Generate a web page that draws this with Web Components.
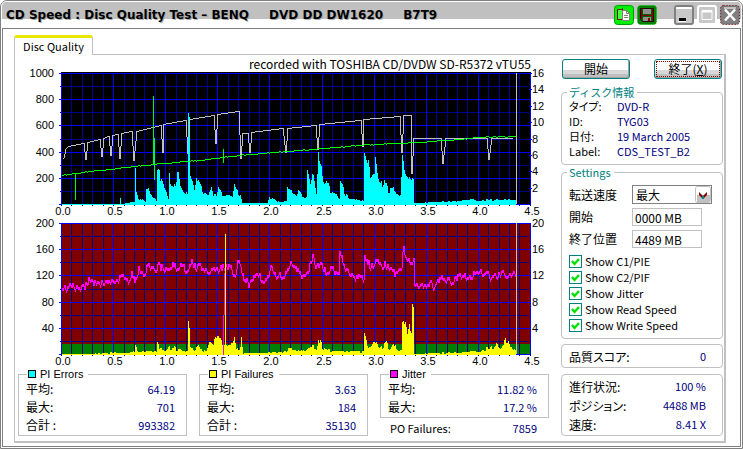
<!DOCTYPE html>
<html lang="ja">
<head>
<meta charset="utf-8">
<title>CD Speed : Disc Quality Test</title>
<style>
  body { margin: 0; background: #fff; color: #000; font: 12px/14px "Noto Sans CJK JP", sans-serif; font-feature-settings: "palt"; }
</style>
</head>
<body>
<app-window>
  <title-bar slot="title"></title-bar>
  <quality-panel></quality-panel>
</app-window>
<script>
const define = (name, html, setup) => {
  const t = document.createElement('template');
  t.innerHTML = html;
  customElements.define(name, class extends HTMLElement {
    connectedCallback() {
      if (this.shadowRoot) return;
      this.attachShadow({ mode: 'open' }).append(t.content.cloneNode(true));
      if (setup) setup(this, this.shadowRoot);
    }
  });
};

define('app-window', `
<style>
  :host { display: flex; flex-direction: column; box-sizing: border-box; min-height: 100vh;
    border: 1px solid #808080; border-radius: 7px 7px 0 0; background: #fff; padding: 0 1px 1px; }
  main { flex: 1; display: flex; flex-direction: column; border: 1px solid #808080; padding: 6px 14px 3px 11px; }
</style>
<slot name="title"></slot>
<main><slot></slot></main>`);

define('title-bar', `
<style>
  :host { display: flex; align-items: center; height: 27px; box-sizing: border-box; padding: 1px 1px 0 4px; gap: 3px;
    border-radius: 6px 6px 0 0;
    background: linear-gradient(#fff 0 1px, #c0c0c0 1px 18px, #fff 18px); }
  h1 { flex: 1; margin: 0; display: flex; gap: 20px; font: bold 12px/18px "DejaVu Sans", "Noto Sans CJK JP", sans-serif;
    text-shadow: 1px 1px #a8a8a8; white-space: nowrap; }
  button { width: 20px; height: 20px; padding: 0; border: 0; background: none; }
  .gap { margin-left: 14px; }
  svg { display: block; }
</style>
<h1><span>CD Speed : Disc Quality Test – BENQ</span><span>DVD DD DW1620</span><span>B7T9</span></h1>
<button aria-label="Copy"><svg width="20" height="20"><rect x=".5" y=".5" width="19" height="19" rx="3" fill="#0e0" stroke="#00a000"/><path d="M3.500 4.500h4l1-1v11h-5z" fill="#4f4" stroke="#800000"/><path d="M8.500 5.500h4l3 3v7h-7z" fill="#fff" stroke="#808080"/><path d="M12.500 5.500v3h3M10 10.500h4M10 12.500h4" fill="none" stroke="#808080"/></svg></button>
<button aria-label="Save"><svg width="20" height="20"><rect x=".5" y=".5" width="19" height="19" rx="3" fill="#008000" stroke="#00c000" stroke-dasharray="1 1"/><path d="M3.500 3.500h13v13h-11l-2-2z" fill="#006000" stroke="#300000"/><path d="M6 4h8v5h-8z" fill="#909090"/><path d="M5 10.500h10M4.500 5v9M15.500 5v10" stroke="#800000"/><path d="M6 12h8v4h-8z" fill="#909090"/><path d="M11 13h2v3h-2z" fill="#800000"/></svg></button>
<button class="gap" aria-label="Minimize"><svg width="20" height="20"><rect x="1" y="1" width="18" height="18" rx="2" fill="#c8c8c8" stroke="#808080" stroke-width="2"/><path d="M2 2h16v2H2z" fill="#fff"/><path d="M5 13h7v3h-7z" fill="#000"/><path d="M4 16.500h8" stroke="#fff"/></svg></button>
<button aria-label="Maximize" disabled><svg width="20" height="20"><rect x="1" y="1" width="18" height="18" rx="2" fill="#c8c8c8" stroke="#fff" stroke-width="2"/><path d="M5 5.500h10v9h-10z" fill="none" stroke="#fff"/><path d="M5 6.500h10" stroke="#fff" stroke-width="2"/></svg></button>
<button aria-label="Close"><svg width="20" height="20"><rect x="1" y="1" width="18" height="18" rx="2" fill="#808080" stroke="#707070"/><rect x=".5" y=".5" width="19" height="19" rx="3" fill="none" stroke="#800000" stroke-dasharray="1 2"/><path d="M4 2h12v2H4z" fill="#c0c0c0"/><path d="M5 4.500l10 11M15 4.500l-10 11" stroke="#fff" stroke-width="2.500"/></svg></button>`);

define('quality-panel', `
<style>
  :host { flex: 1; display: flex; flex-direction: column; }
  nav { display: flex; }
  nav::after { content: ""; flex: 1; border-bottom: 1px solid #c0c0c0; }
  .tab { width: 79px; height: 20px; padding: 0 0 1px; border: 1px solid #c0c0c0; border-bottom: 0; border-top: 3px solid #e8e800;
    border-radius: 3px 3px 0 0; background: #fff; color: #000; font: 11px/14px "Noto Sans CJK JP", sans-serif; white-space: nowrap; }
  .panel { flex: 1; display: grid; grid-template-columns: minmax(0, 1fr) 162px; column-gap: 12px; align-items: start;
    border: 1px solid #c0c0c0; border-top: 0; border-right-width: 2px; border-bottom-width: 2px; padding: 3px 1px 3px 3px; }
  .caption { padding-right: 18px; text-align: right; font-size: 12px; line-height: 12px; white-space: nowrap; }
  .stats { display: grid; grid-template-columns: repeat(3, minmax(0, 1fr)); column-gap: 12px; align-items: start; padding-top: 1px; }
</style>
<nav role="tablist"><button class="tab" role="tab" aria-selected="true">Disc Quality</button></nav>
<div class="panel" role="tabpanel">
  <div>
    <div class="caption">recorded with TOSHIBA CD/DVDW SD-R5372 vTU55</div>
    <disc-chart kind="errors"></disc-chart>
    <disc-chart kind="jitter"></disc-chart>
    <div class="stats">
      <group-box label="PI Errors" swatch="#00ffff">
        <stat-row label="平均:" value="64.19"></stat-row>
        <stat-row label="最大:" value="701"></stat-row>
        <stat-row label="合計 :" value="993382"></stat-row>
      </group-box>
      <group-box label="PI Failures" swatch="#ffff00">
        <stat-row label="平均:" value="3.63"></stat-row>
        <stat-row label="最大:" value="184"></stat-row>
        <stat-row label="合計 :" value="35130"></stat-row>
      </group-box>
      <div>
        <group-box label="Jitter" swatch="#ff00ff">
          <stat-row label="平均:" value="11.82 %"></stat-row>
          <stat-row label="最大:" value="17.2 %"></stat-row>
        </group-box>
        <stat-row plain label="PO Failures:" value="7859"></stat-row>
      </div>
    </div>
  </div>
  <side-bar></side-bar>
</div>`);

define('group-box', `
<style>
  :host { display: block; }
  fieldset { margin: 0; min-width: 0; padding: 0 0 1px; border: 1px solid #c0c0c0; }
  legend { display: flex; align-items: center; gap: 4px; height: 12px; margin-left: 8px; padding: 0 5px 0 1px; font: 11px/12px "Liberation Sans", sans-serif; white-space: nowrap; }
  i { width: 6px; height: 6px; border: 1px solid #000; }
  :host([round]) fieldset { border-radius: 4px; padding-bottom: 5px; }
  :host([round]) legend { height: 14px; color: #008080; margin-left: 5px; padding: 0 3px 0 2px; font-family: "Noto Sans CJK JP", sans-serif; }
</style>
<fieldset><legend></legend><slot></slot></fieldset>`, (el, root) => {
  const legend = root.querySelector('legend');
  if (el.hasAttribute('swatch')) {
    const i = document.createElement('i');
    i.style.background = el.getAttribute('swatch');
    legend.append(i);
  }
  legend.append(el.getAttribute('label'));
});

define('stat-row', `
<style>
  :host { display: flex; justify-content: space-between; align-items: center; line-height: 18px; padding: 0 11px 0 7px; white-space: nowrap; }
  .v { color: #000080; font-size: 11px; }
  :host([plain]) { padding: 1px 12px 0 10px; font-size: 11px; }
  :host([narrow]) { line-height: 15px; justify-content: flex-start; font-size: 11px; }
  :host([narrow]) .k { width: 48px; }
  :host([wide]) { line-height: 19px; padding-right: 16px; }
</style>
<span class="k"></span><span class="v"></span>`, (el, root) => {
  root.querySelector('.k').textContent = el.getAttribute('label');
  root.querySelector('.v').textContent = el.getAttribute('value');
});

define('check-option', `
<style>
  :host { display: block; }
  label { display: flex; align-items: center; gap: 3px; height: 16px; font-size: 11px; white-space: nowrap; }
  span { display: grid; }
  input, svg { grid-area: 1 / 1; }
  input { appearance: none; width: 13px; height: 13px; margin: 0; border: 1px solid #008080; background: #fff; }
  svg { pointer-events: none; visibility: hidden; }
  input:checked + svg { visibility: visible; }
</style>
<label><span><input type="checkbox" checked><svg width="13" height="13" viewBox="0 0 13 13"><path d="M3 6l2.500 3L10 4" fill="none" stroke="#00e000" stroke-width="2.400"/></svg></span><slot></slot></label>`);

define('side-bar', `
<style>
  :host { display: flex; flex-direction: column; padding-top: 1px; }
  .buttons { display: flex; justify-content: space-between; margin: 0 1px 6px; }
  .buttons button { width: 68px; height: 20px; padding: 0; border: 1px solid #008080; border-radius: 3px; color: #000;
    background: linear-gradient(#fff 0 10px, #d8d8d8 10px 14px, #c0c0c0 14px); box-shadow: inset -1px -1px #a0a0a0; font: 12px/16px "Noto Sans CJK JP", sans-serif; }
  .buttons .exit { outline: 1px dotted #800000; outline-offset: -3px; }
  .settings { display: grid; grid-template-columns: 63px 1fr; row-gap: 4px; align-items: center; padding: 6px 10px 5px 7px; }
  .select { display: grid; }
  select, input { box-sizing: border-box; margin: 0; padding: 0 0 0 3px; background: #fff; color: #000; border-radius: 0; font: 12px/14px "Noto Sans CJK JP", sans-serif; }
  select { grid-area: 1 / 1; appearance: none; height: 19px; border: 1px solid #808080; }
  .select svg { grid-area: 1 / 1; justify-self: end; align-self: center; margin-right: 1px; pointer-events: none; }
  input { width: 70px; height: 18px; border: 1px solid #c0c0c0; padding-left: 2px; }
  .checks { padding-left: 7px; }
  .score { margin: 5px 0 6px; }
  .box { border: 1px solid #c0c0c0; border-radius: 4px; padding: 2px 0 1px; }
</style>
<div class="buttons"><button>開始</button><button class="exit">終了(<u>X</u>)</button></div>
<group-box round label="ディスク情報">
  <stat-row narrow label="タイプ:" value="DVD-R"></stat-row>
  <stat-row narrow label="ID:" value="TYG03"></stat-row>
  <stat-row narrow label="日付:" value="19 March 2005"></stat-row>
  <stat-row narrow label="Label:" value="CDS_TEST_B2"></stat-row>
</group-box>
<group-box round label="Settings">
  <div class="settings">
    <label for="speed">転送速度</label>
    <div class="select"><select id="speed"><option>最大</option></select>
      <svg width="16" height="17"><rect x=".5" y=".5" width="15" height="16" rx="2" fill="#fff" stroke="#c0c0c0"/><path d="M2 9h13v7H2z" fill="#c0c0c0"/><path d="M4 6l4 4 4-4v3l-4 4-4-4z" fill="#800000"/><path d="M7 10h2v3h-2z" fill="#008080"/></svg></div>
    <label for="start">開始</label><input id="start" value="0000 MB">
    <label for="end">終了位置</label><input id="end" value="4489 MB">
  </div>
  <div class="checks">
    <check-option>Show C1/PIE</check-option>
    <check-option>Show C2/PIF</check-option>
    <check-option>Show Jitter</check-option>
    <check-option>Show Read Speed</check-option>
    <check-option>Show Write Speed</check-option>
  </div>
</group-box>
<div class="box score"><stat-row wide label="品質スコア:" value="0"></stat-row></div>
<div class="box"><stat-row wide label="進行状況:" value="100 %"></stat-row><stat-row wide label="ポジション:" value="4488 MB"></stat-row><stat-row wide label="速度:" value="8.41 X"></stat-row></div>`);

/* Series are lists of x,y pairs in the drawing units of the charts. */
const SERIES = {
  burn: '63,158 65,149 68,146 83,143 85,160 87,142 99,139 101,157 103,138 108,136 110,156 112,135 117,134 119,159 121,133 131,131 133,161 136,131 160,125 162,153 163,124 185,120 187,154 189,119 213,115 215,144 217,114 238,111 240,159 242,133 247,133 249,153 251,132 282,128 285,153 287,128 315,125 317,150 319,124 360,120 362,147 363,119 399,116 401,153 403,115 410,115 411,174 413,138 440,138 442,164 445,138 486,138 488,160 491,138 513,138',
  read: '62,175 75,173 110,169 153,164 200,160 223,157 240,155 300,150 360,145 400,143 450,140 480,137 516,136',
  pie: '61,204 119,204 120,199 121,204 129,203 134,202 135,167 136,192 138,198 145,201 146,189 148,190 150,195 154,199 156,201 157,170 159,173 160,185 162,180 165,188 168,200 169,177 172,185 175,189 177,170 178,173 180,186 183,190 186,194 187,195 188,113 189,113 190,174 192,180 194,188 196,176 198,182 201,188 203,192 208,196 211,186 213,195 216,195 218,188 222,195 232,196 234,185 236,190 240,195 242,203 267,203 269,198 280,202 286,200 287,184 288,191 292,192 296,196 298,192 302,197 306,196 307,167 310,183 312,175 314,178 316,191 318,149 320,168 322,172 324,184 326,182 330,190 335,194 339,200 340,184 342,187 345,194 350,199 363,201 364,152 366,158 368,164 370,178 374,174 375,157 377,175 380,186 384,181 388,191 394,189 400,195 402,159 404,170 406,177 408,180 410,176 413,178 414,203 440,202 455,201 470,200 500,200 516,200',
  jitter: '62,287 85,286 88,279 95,285 105,281 115,281 122,276 128,284 131,273 134,280 138,270 143,277 147,263 150,265 154,273 158,266 165,270 170,264 176,268 182,265 186,272 190,261 195,267 200,266 206,272 212,268 222,268 230,267 234,278 237,261 242,277 248,284 255,273 262,280 266,281 270,268 275,275 283,276 287,268 291,261 296,271 303,277 308,268 312,256 315,267 320,263 326,273 331,268 338,275 339,249 343,263 347,273 353,278 363,276 364,259 370,267 375,261 381,263 388,268 395,274 401,265 403,244 405,258 410,262 413,260 414,285 425,284 436,284 440,278 450,280 460,276 470,277 478,270 490,277 505,273 516,274',
  pif: '61,354 90,354 108,353 130,353 134,352 135,344 137,351 156,352 157,342 159,350 165,350 172,347 176,350 180,349 187,352 188,317 189,324 190,345 194,350 197,344 200,350 206,351 210,341 213,344 217,335 220,340 222,343 225,344 227,346 230,345 234,338 236,350 240,347 241,336 243,353 265,353 280,352 290,349 300,352 310,346 316,347 318,337 320,344 326,350 340,352 350,351 363,352 364,332 366,338 368,350 374,342 380,349 385,343 390,350 395,343 398,350 401,350 402,326 405,322 407,335 409,325 411,330 412,303 413,306 414,354 440,353 470,352 480,350 490,348 495,345 500,349 505,341 507,342 510,348 516,350'
};
const points = s => s.split(' ').map(p => p.split(',').map(Number));
const sample = (pts, x) => {
  let i = 1;
  while (i < pts.length - 1 && pts[i][0] < x) i++;
  const [a, b] = [pts[i - 1], pts[i]];
  return a[1] + (b[1] - a[1]) * Math.min(1, Math.max(0, (x - a[0]) / (b[0] - a[0])));
};
const noise = n => { const v = Math.sin(n * 127.1) * 43758.5453; return (v - Math.floor(v)) * 2 - 1; };
const bars = (name, base, color, amount) => {
  const pts = points(SERIES[name]);
  let d = '';
  for (let x = 62; x < 516; x++) {
    const h = base - sample(pts, x);
    const y = Math.min(base - 1, Math.round(base - h - noise(Math.floor(x / 2)) * Math.min(4, h * amount)));
    d += `M${x} ${base}V${y}h1V${base}z`;
  }
  return `<path d="${d}" fill="${color}"/>`;
};
/* One filled column per unit of x, tall enough to join it to the column before. */
const trace = (name, color, amount, thick) => {
  const pts = points(SERIES[name]);
  const end = pts[pts.length - 1][0];
  let d = '', prev;
  for (let x = pts[0][0]; x < end; x++) {
    const y = Math.round(sample(pts, x) + noise(x) * amount);
    const from = prev === undefined ? y : prev;
    const lo = Math.min(y, from), hi = Math.max(y, from);
    d += `M${x} ${lo}h1V${Math.max(hi, lo + thick)}h-1z`;
    prev = y;
  }
  return `<path d="${d}" fill="${color}"/>`;
};
const grid = (top, minor) => {
  let lo = '', hi = '', labels = '';
  for (let i = 0; i <= 45; i++) {
    const x = Math.round(61 + i * 10.42);
    if (i % 5) lo += `M${x} ${top}h1v131h-1z`;
    else {
      hi += `M${x} ${top}h1v131h-1z`;
      labels += `<text x="${x + 2}" y="${top + 142}" text-anchor="middle">${(i / 10).toFixed(1)}</text>`;
    }
    lo += `M${x} ${top + 131}h1v2h-1z`;
  }
  for (let j = 0; j <= 10; j++) {
    const y = top + Math.round(j * 13.1);
    if (j % 2) lo += `M60 ${y}h469v1h-469z`; else hi += `M59 ${y}h471v1h-471z`;
  }
  return [`<path d="${lo}" fill="${minor}"/><path d="${hi}" fill="#0000ff"/>`, labels];
};

define('disc-chart', `
<style>
  :host { display: block; }
  svg { display: block; width: 100%; height: auto; overflow: visible; }
  path, rect { shape-rendering: crispEdges; }
  text { font: 11px "Liberation Sans", sans-serif; }
</style>
<svg role="img"></svg>`, (el, root) => {
  const svg = root.querySelector('svg');
  const upper = el.getAttribute('kind') === 'errors';
  const top = upper ? 73 : 223;
  svg.setAttribute('aria-label', upper ? 'PI Errors' : 'PI Failures / Jitter');
  svg.setAttribute('viewBox', upper ? '18 70 531 147' : '18 217 531 150');
  const [lines, labels] = grid(top, upper ? '#000090' : '#000080');
  const left = upper ? [1000, 800, 600, 400, 200] : [200, 160, 120, 80, 40];
  const right = upper ? [16, 14, 12, 10, 8, 6, 4, 2] : [20, 16, 12, 8, 4];
  const step = upper ? 16.4 : 26.2;
  const text = left.map((v, i) => `<text x="54" y="${top + 4 + Math.round(i * 26.2)}" text-anchor="end">${v}</text>`).join('')
    + right.map((v, i) => `<text x="532" y="${top + 4 + Math.round(i * step)}">${v}</text>`).join('');
  const ticks = upper ? right.map((v, i) => `<path d="M529 ${top + Math.round(i * step)}h3v1h-3z" fill="#0000ff"/>`).join('') : '';
  svg.innerHTML = (upper
    ? `<rect x="61" y="72" width="470" height="133" fill="#000"/>`
    : `<rect x="61" y="223" width="470" height="121" fill="#800000"/><rect x="61" y="344" width="470" height="11" fill="#008000"/>`)
    + lines
    + (upper
      ? bars('pie', 205, '#00ffff', .2) + trace('burn', '#c0c0c0', 0, 1) + trace('read', '#00ff00', 0.4, 1)
        + '<path d="M74 173h1v27h1v-27zM153 96h1v42h1v42h-1v-16h-1zM223 149h1v14h-1z" fill="#00ff00"/><path d="M188 113h1v92h-1z" fill="#00ffff"/>'
      : bars('pif', 355, '#ffff00', .35) + trace('jitter', '#ff00ff', 4, 3)
        + '<path d="M223 315h1v40h-1zM224 273h1v42h-1z" fill="#ff00ff"/><path d="M225 234h1v121h-1z" fill="#ffff00"/>')
    + `<path d="M516 ${top}h1v131h-1z" fill="#c0c0c0"/>` + ticks + labels + text;
});
</script>
</body>
</html>
